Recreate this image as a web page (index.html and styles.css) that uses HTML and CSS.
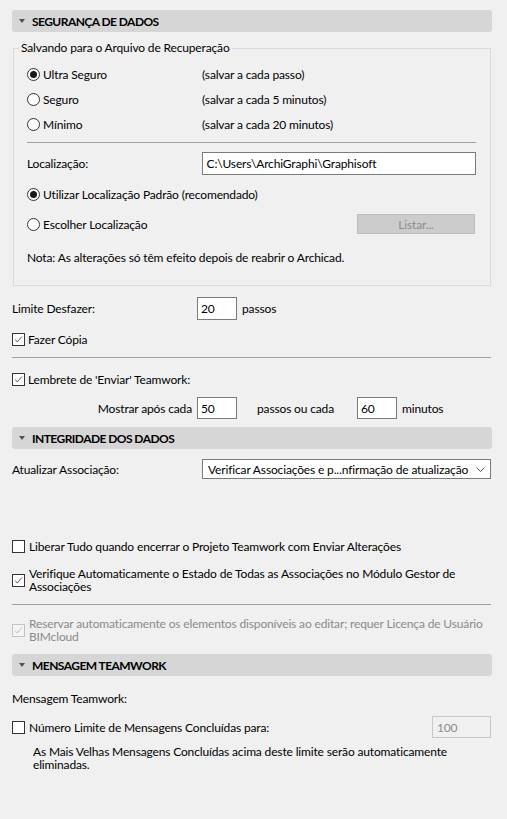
FILE: index.html
```html
<!DOCTYPE html>
<html lang="pt">
<head>
<meta charset="utf-8">
<title>Segurança de Dados</title>
<link rel="stylesheet" href="styles.css">
</head>
<body>
<div class="panel">
  <div class="sec-head sec-first"><span class="tri"></span><span>SEGURANÇA DE DADOS</span></div>

  <fieldset class="group">
    <legend>Salvando para o Arquivo de Recuperação</legend>
    <div class="opt-row"><span class="radio checked"></span><span class="opt-label">Ultra Seguro</span><span>(salvar a cada passo)</span></div>
    <div class="opt-row"><span class="radio"></span><span class="opt-label">Seguro</span><span>(salvar a cada 5 minutos)</span></div>
    <div class="opt-row"><span class="radio"></span><span class="opt-label">Mínimo</span><span>(salvar a cada 20 minutos)</span></div>
    <div class="rule rule-inner"></div>
    <div class="loc-row"><span class="loc-label">Localização:</span><span class="field field-loc">C:\Users\ArchiGraphi\Graphisoft</span></div>
    <div class="row row-util"><span class="radio checked"></span><span>Utilizar Localização Padrão (recomendado)</span></div>
    <div class="row row-choose"><span class="radio"></span><span>Escolher Localização</span><span class="btn-disabled">Listar...</span></div>
    <div class="row row-note">Nota: As alterações só têm efeito depois de reabrir o Archicad.</div>
  </fieldset>

  <div class="row row-undo"><span class="undo-label">Limite Desfazer:</span><span class="field field-num">20</span><span class="unit">passos</span></div>
  <div class="row row-copy"><span class="check checked"><svg viewBox="0 0 13 13"><polyline points="2.5,6.5 5,9.5 10.5,3"/></svg></span><span>Fazer Cópia</span></div>
  <div class="rule rule-a"></div>
  <div class="row row-remind"><span class="check checked"><svg viewBox="0 0 13 13"><polyline points="2.5,6.5 5,9.5 10.5,3"/></svg></span><span>Lembrete de 'Enviar' Teamwork:</span></div>
  <div class="row row-show"><span class="show-label">Mostrar após cada</span><span class="field field-num field-short">50</span><span class="mid-label">passos ou cada</span><span class="field field-num field-short">60</span><span class="unit">minutos</span></div>

  <div class="sec-head sec-second"><span class="tri"></span><span>INTEGRIDADE DOS DADOS</span></div>
  <div class="row row-assoc"><span class="assoc-label">Atualizar Associação:</span><span class="select"><span class="select-text">Verificar Associações e p...nfirmação de atualização</span><svg class="chev" viewBox="0 0 9 5"><polyline points="0.5,0.5 4.5,4.5 8.5,0.5"/></svg></span></div>

  <div class="row row-release"><span class="check"></span><span>Liberar Tudo quando encerrar o Projeto Teamwork com Enviar Alterações</span></div>
  <div class="row row-verify"><span class="check checked"><svg viewBox="0 0 13 13"><polyline points="2.5,6.5 5,9.5 10.5,3"/></svg></span><span class="wrap">Verifique Automaticamente o Estado de Todas as Associações no Módulo Gestor de Associações</span></div>
  <div class="rule rule-b"></div>
  <div class="row row-reserve disabled"><span class="check checked dis"><svg viewBox="0 0 13 13"><polyline points="2.5,6.5 5,9.5 10.5,3"/></svg></span><span class="wrap wrap-wide">Reservar automaticamente os elementos disponíveis ao editar; requer Licença de Usuário BIMcloud</span></div>

  <div class="sec-head sec-third"><span class="tri"></span><span>MENSAGEM TEAMWORK</span></div>
  <div class="row row-msg">Mensagem Teamwork:</div>
  <div class="row row-limit"><span class="check"></span><span>Número Limite de Mensagens Concluídas para:</span><span class="field field-dis">100</span></div>
  <div class="note-old">As Mais Velhas Mensagens Concluídas acima deste limite serão automaticamente eliminadas.</div>
</div>
</body>
</html>
```

FILE: styles.css
```css
* { box-sizing: border-box; }
html, body { margin: 0; padding: 0; }
body {
  background: #f0f0f0;
  font-family: Lato, "Noto Sans", sans-serif;
  font-size: 12px;
  letter-spacing: -0.15px;
  color: #000;
  width: 507px;
  height: 819px;
  overflow: hidden;
}
.panel {
  padding: 10px 15px 0 12px;
  width: 507px;
}
.sec-head {
  height: 22px;
  background: #d6d6d6;
  border-radius: 3px;
  display: flex;
  align-items: center;
  padding-left: 7px;
  font-weight: 700;
  font-size: 12px;
  letter-spacing: -0.55px;
  gap: 7px;
}
.tri {
  width: 0; height: 0;
  border-left: 3.5px solid transparent;
  border-right: 3.5px solid transparent;
  border-top: 4px solid #505050;
}
.group {
  margin: 8px 1px 0 1px;
  padding: 6px 14px 16px 13px;
  border: 1px solid #dadada;
  min-width: 0;
}
.group legend {
  padding: 0 2px;
  margin-left: -8px;
  line-height: 16px;
  height: 16px;
}
.opt-row {
  height: 25px;
  display: flex;
  align-items: center;
}
.opt-label { width: 159px; margin-left: 3px; }
.radio {
  width: 13px; height: 13px;
  border: 1px solid #333;
  border-radius: 50%;
  background: #fff;
  flex: none;
  display: flex;
  align-items: center;
  justify-content: center;
}
.radio.checked::after {
  content: "";
  width: 7px; height: 7px;
  border-radius: 50%;
  background: #1a1a1a;
}
.rule { height: 1px; background: #a0a0a0; }
.rule-inner { margin-top: 5px; }
.row { display: flex; align-items: center; gap: 3px; }
.loc-row { display: flex; align-items: center; height: 23px; margin-top: 9px; }
.loc-label { width: 175px; }
.field {
  background: #fff;
  border: 1px solid #7a7a7a;
  display: flex;
  align-items: center;
  padding-left: 4px;
  height: 23px;
}
.field-loc { width: 275px; }
.row-util { height: 24px; margin-top: 7px; }
.row-choose { height: 24px; margin-top: 6px; }
.btn-disabled {
  margin-left: auto;
  margin-right: 1px;
  width: 118px;
  height: 20px;
  background: #cccccc;
  border: 1px solid #bdbdbd;
  color: #8c8c8c;
  display: flex;
  align-items: center;
  justify-content: center;
}
.row-note { height: 24px; margin-top: 9px; }

.row-undo { height: 23px; margin-top: 11px; gap: 0; }
.undo-label { width: 185px; }
.field-num { width: 40px; padding-left: 3px; }
.unit { margin-left: 5px; }
.check {
  width: 13px; height: 13px;
  border: 1px solid #333;
  background: #fff;
  flex: none;
  display: flex;
}
.check svg { width: 11px; height: 11px; }
.check polyline { fill: none; stroke: #444; stroke-width: 1; }
.check.dis { border-color: #c4c4c4; background: #f4f4f4; }
.check.dis polyline { stroke: #b4b4b4; }
.row-copy { height: 24px; margin-top: 7px; }
.rule-a { margin-top: 6px; margin-right: 1px; }
.row-remind { height: 24px; margin-top: 9px; }
.row-show { height: 22px; margin-top: 6px; gap: 0; }
.show-label { width: 180px; text-align: right; margin-right: 5px; }
.field-short { height: 22px; }
.mid-label { width: 100px; margin-left: 20px; }

.sec-second { margin-top: 8px; }
.row-assoc { height: 20px; margin-top: 10px; gap: 0; }
.assoc-label { width: 190px; }
.select {
  width: 289px;
  height: 20px;
  background: #fff;
  border: 1px solid #7a7a7a;
  display: flex;
  align-items: center;
  padding-left: 5px;
  padding-right: 5px;
}
.select-text { flex: 1; white-space: nowrap; overflow: hidden; }
.chev { width: 9px; height: 5px; }
.chev polyline { fill: none; stroke: #555; stroke-width: 1; }

.row-release { height: 24px; margin-top: 55px; gap: 4px; }
.row-verify { margin-top: 9px; gap: 4px; }
.wrap { line-height: 13px; flex: 1; padding-right: 20px; }
.wrap-wide { padding-right: 0; }
.rule-b { margin-top: 11px; margin-right: 1px; }
.row-reserve { margin-top: 12px; gap: 4px; color: #8a8a8a; }

.sec-third { margin-top: 11px; }
.row-msg { height: 24px; margin-top: 10px; }
.row-limit { height: 22px; margin-top: 6px; gap: 4px; }
.field-dis {
  margin-left: auto;
  margin-right: 1px;
  width: 59px;
  height: 22px;
  background: #f0f0f0;
  border-color: #c8c8c8;
  color: #8a8a8a;
}
.note-old { margin-top: 7px; padding-left: 21px; line-height: 13px; padding-right: 20px; }
```
